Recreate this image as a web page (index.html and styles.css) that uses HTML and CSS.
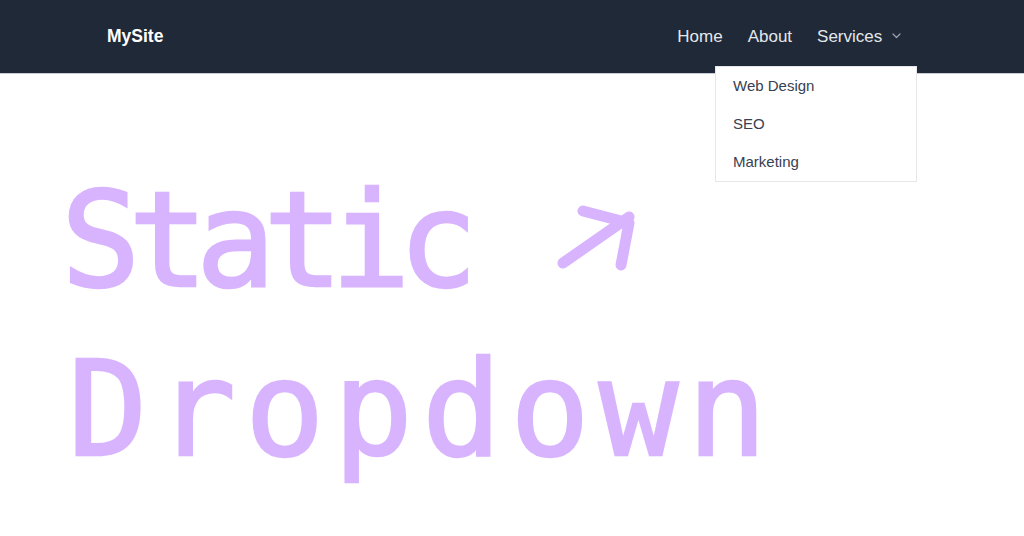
FILE: index.html
```html
<!DOCTYPE html>
<html lang="en">
<head>
    <meta charset="UTF-8">
    <title>Static Dropdown</title>
    <link rel="stylesheet" href="styles.css">
</head>
<body>
<nav class="navbar">
    <div class="nav-inner">
        <a class="logo" href="#">MySite</a>
        <ul class="menu">
            <li><a href="#">Home</a></li>
            <li><a href="#">About</a></li>
            <li class="has-sub">
                <a href="#">Services
                    <svg class="chevron" width="9" height="6" viewBox="0 0 9 6"><path d="M1 1l3.5 3.5L8 1" fill="none" stroke="#9ca3af" stroke-width="1.2" stroke-linecap="round" stroke-linejoin="round"/></svg>
                </a>
                <ul class="dropdown">
                    <li><a href="#">Web Design</a></li>
                    <li><a href="#">SEO</a></li>
                    <li><a href="#">Marketing</a></li>
                </ul>
            </li>
        </ul>
    </div>
</nav>
<main class="hero">
    <h1>
        <span class="line line-1">Static <svg class="arrow" width="80" height="66" viewBox="0 0 80 66"><path d="M8 58L74 12M28 6l46 12-8 42" fill="none" stroke="#d8b4fe" stroke-width="11" stroke-linecap="round" stroke-linejoin="round"/></svg></span>
        <span class="line line-2">Dropdown</span>
    </h1>
</main>
</body>
</html>
```

FILE: styles.css
```css
* {
    margin: 0;
    padding: 0;
    list-style: none;
    box-sizing: border-box;
}

body {
    background: #fff;
    font-family: "Liberation Sans", Arial, sans-serif;
}

a {
    text-decoration: none;
    color: inherit;
}

.navbar {
    height: 74px;
    background: #1f2937;
    border-bottom: 1px solid #c9cdd4;
}

.nav-inner {
    width: 810px;
    height: 73px;
    margin: 0 auto;
    display: flex;
    align-items: center;
    justify-content: space-between;
}

.logo {
    color: #fff;
    font-weight: bold;
    font-size: 17.5px;
}

.menu {
    display: flex;
    align-items: center;
    gap: 25px;
    color: #e5e7eb;
    font-size: 17px;
}

.has-sub {
    position: relative;
    padding-right: 16px;
}

.chevron {
    margin-left: 5px;
    vertical-align: 3px;
}

.dropdown {
    position: absolute;
    top: 39px;
    right: 0;
    width: 202px;
    background: #fff;
    border: 1px solid #e5e7eb;
    color: #374151;
    font-size: 15px;
}

.dropdown li a {
    display: block;
    height: 38px;
    line-height: 38px;
    padding-left: 17px;
}

.hero {
    padding: 82px 0 0 61px;
}

.hero h1 {
    font-family: "DejaVu Sans Mono", monospace;
    font-weight: normal;
    font-size: 132px;
    color: #d8b4fe;
    line-height: 169px;
    -webkit-text-stroke: 2.5px #d8b4fe;
}

.line {
    display: block;
    white-space: nowrap;
}

.line-1 {
    letter-spacing: -12px;
}

.line-2 {
    letter-spacing: 9px;
    text-indent: 7px;
}

.arrow {
    margin-left: 22px;
    vertical-align: 15px;
}
```
